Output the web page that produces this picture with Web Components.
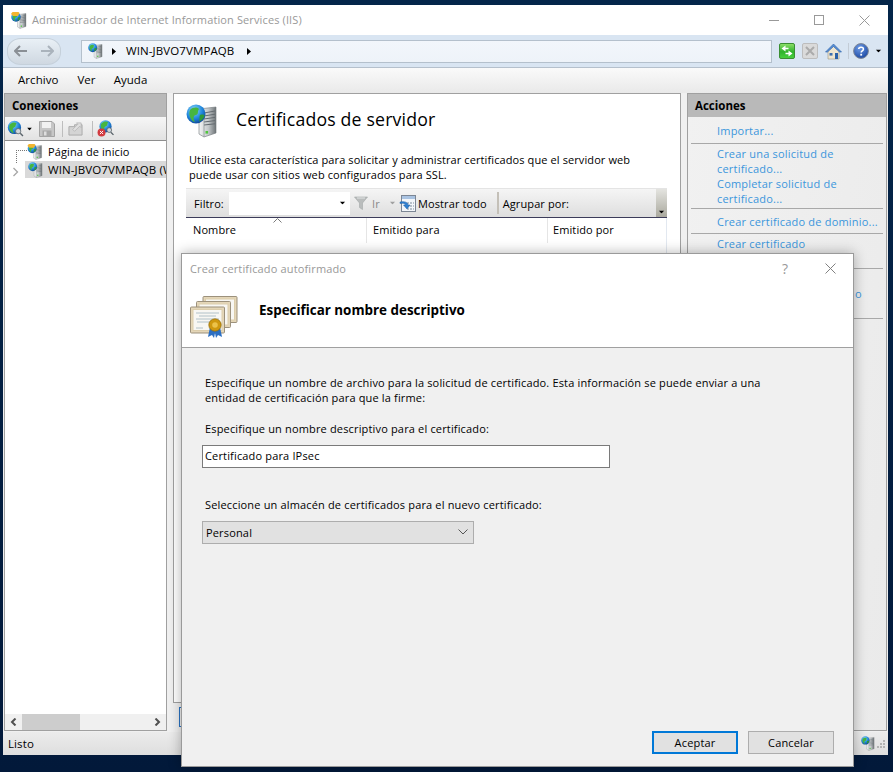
<!DOCTYPE html>
<html lang="es">
<head>
<meta charset="utf-8">
<title>Administrador de IIS</title>
<style>
  html, body { margin: 0; height: 100%; }
  body {
    background: linear-gradient(#04264a, #02193a);
    font: 11px "Open Sans", "Liberation Sans", sans-serif;
    letter-spacing: .1px;
    color: #000;
    overflow: hidden;
  }
</style>
</head>
<body>
<iis-window>
  <iis-caption slot="top" text="Administrador de Internet Information Services (IIS)"></iis-caption>
  <iis-navbar slot="top"></iis-navbar>
  <iis-menu slot="top"></iis-menu>
  <iis-connections slot="left"></iis-connections>
  <iis-content slot="center"></iis-content>
  <iis-actions slot="right">
    <action-link>Importar...</action-link>
    <action-sep style="margin-top:4px"></action-sep>
    <action-link style="margin-top:3px">Crear una solicitud de<br>certificado...</action-link>
    <action-link>Completar solicitud de<br>certificado...</action-link>
    <action-sep style="margin-top:1px"></action-sep>
    <action-link style="margin-top:6px">Crear certificado de dominio...</action-link>
    <action-sep style="margin-top:3px"></action-sep>
    <action-link style="margin-top:3px">Crear certificado</action-link>
    <action-sep style="margin-top:16px"></action-sep>
    <action-link style="margin-top:18px;margin-left:167px">o</action-link>
    <action-sep style="margin-top:16px"></action-sep>
  </iis-actions>
  <iis-status slot="bottom">Listo</iis-status>
</iis-window>
<cert-dialog></cert-dialog>

<script>
const serverBody = `
  <defs>
    <linearGradient id="sv" x1="0" x2="1" y1="0" y2="0">
      <stop offset="0" stop-color="#f4f5f5"/><stop offset=".55" stop-color="#c3c8ca"/><stop offset="1" stop-color="#6d7376"/>
    </linearGradient>
    <radialGradient id="gl" cx=".4" cy=".3" r=".8">
      <stop offset="0" stop-color="#8fdcf8"/><stop offset=".55" stop-color="#1f86dc"/><stop offset="1" stop-color="#0c3a86"/>
    </radialGradient>
  </defs>
  <path d="M13 5 L30 3 V29 L18 33 L13 30Z" fill="url(#sv)" stroke="#6f7578" stroke-width=".6"/>
  <path d="M18 9 L29 7 M18 12 L29 10.2 M18 15 L29 13.4 M18 18 L29 16.6 M18 21 L29 19.8" stroke="#646b70" stroke-width="1" fill="none"/>
  <path d="M18 8 V33" stroke="#888f92" stroke-width=".7"/>
  <rect x="19.5" y="27" width="2.6" height="2.6" fill="#4fc63a"/>
  <circle cx="10" cy="10" r="9.5" fill="url(#gl)"/>
  <path d="M4 6 C7 3 11 3 13 5 C11 8 13 10 10 11 C7 11 7 15 9 18 C5 17 2 11 4 6Z" fill="#46b53f"/>
  <path d="M14 11 C17 10 18.5 11 18.5 12 C17.5 15 15 17 13 17.5 C14 15 13 13 14 11Z" fill="#2f9a3a"/>`;

const ICONS = {
  server: `<svg viewBox="0 0 32 34">${serverBody}</svg>`,
  home: `<svg viewBox="0 0 32 34">${serverBody}
    <path d="M0 4 A10 10 0 0 1 17 2 L14 8 H4Z" fill="#f2b530"/></svg>`,
  connect: `<svg viewBox="0 0 32 32"><defs><radialGradient id="gl" cx=".4" cy=".3" r=".8"><stop offset="0" stop-color="#8fdcf8"/><stop offset=".55" stop-color="#1f86dc"/><stop offset="1" stop-color="#0c3a86"/></radialGradient></defs>
    <circle cx="14" cy="14" r="12.5" fill="url(#gl)"/>
    <path d="M5 9 C9 4 15 4 18 6 C15 10 18 12 13 14 C10 15 10 20 13 25 C7 24 2 15 5 9Z" fill="#46b53f"/>
    <circle cx="21" cy="21" r="5" fill="#cfd6da" stroke="#59636a" stroke-width="1.5"/>
    <path d="M25 25 L30 30" stroke="#59636a" stroke-width="2.6"/></svg>`,
  disconnect: `<svg viewBox="0 0 32 32"><defs><radialGradient id="gl" cx=".4" cy=".3" r=".8"><stop offset="0" stop-color="#8fdcf8"/><stop offset=".55" stop-color="#1f86dc"/><stop offset="1" stop-color="#0c3a86"/></radialGradient></defs>
    <circle cx="16" cy="12" r="11.5" fill="url(#gl)"/>
    <path d="M8 7 C12 2 18 2 21 4 C18 8 21 10 16 12 C13 13 13 16 15 21 C10 20 5 13 8 7Z" fill="#46b53f"/>
    <circle cx="23" cy="19" r="4.5" fill="#cfd6da" stroke="#59636a" stroke-width="1.5"/>
    <path d="M26 23 L31 28" stroke="#59636a" stroke-width="2.4"/>
    <circle cx="8.5" cy="23.5" r="7.5" fill="#d23a3f"/>
    <path d="M5.5 20.5 L11.5 26.5 M11.5 20.5 L5.5 26.5" stroke="#fff" stroke-width="1.8"/></svg>`,
  save: `<svg viewBox="0 0 16 16"><path d="M.5 .5 H13 L15.5 3 V15.5 H.5Z" fill="#c6c6c6" stroke="#a3a3a3"/>
    <rect x="3" y="1" width="9" height="6" fill="#f1f1f1"/><rect x="3.5" y="9.500" width="9" height="6" fill="#a8a8a8"/><rect x="5" y="10.500" width="2.5" height="4" fill="#dedede"/></svg>`,
  up: `<svg viewBox="0 0 16 16"><path d="M1 6 H7 V4 H15 V15 H1Z" fill="#d4d4d4" stroke="#a9a9a9"/>
    <path d="M5 9 L10.5 3.5 L9 2 H14 V7 L12.5 5.5 L7 11Z" fill="#e0e0e0" stroke="#adadad" stroke-width=".7"/></svg>`,
  refresh: `<svg viewBox="0 0 16 16"><defs><linearGradient id="g" x1="0" x2="0" y1="0" y2="1"><stop offset="0" stop-color="#8fe06a"/><stop offset=".55" stop-color="#2fb32c"/><stop offset="1" stop-color="#48d23e"/></linearGradient></defs>
    <rect x=".5" y=".5" width="15" height="15" rx="1.5" fill="url(#g)" stroke="#3a8f33"/>
    <path d="M2.500 5.500 L6.500 2.500 V8.500Z M9.500 7.500 L13.500 10.500 L9.500 13.500Z" fill="#fff"/>
    <path d="M6 5.500 H9.500 M6.500 10.500 H10" stroke="#fff" stroke-width="1.500" fill="none"/></svg>`,
  stop: `<svg viewBox="0 0 16 16"><rect x=".5" y=".5" width="15" height="15" rx="1.5" fill="#dadada" stroke="#bdbdbd"/>
    <path d="M4 4 L12 12 M12 4 L4 12" stroke="#ababab" stroke-width="2"/></svg>`,
  house: `<svg viewBox="0 0 17 17"><path d="M3 8 V16 H14 V8 L8.500 3Z" fill="#efe6cf" stroke="#9a947f" stroke-width=".6"/>
    <path d="M.5 9 L8.500 1 L16.500 9 L14.500 9 L8.500 3.500 L2.500 9Z" fill="#5a8fd4" stroke="#2a5ea8" stroke-width=".6"/>
    <rect x="10" y="10" width="3" height="6" fill="#2b62a8"/><rect x="4.500" y="10" width="3" height="2.600" fill="#3d6fae"/></svg>`,
  help: `<svg viewBox="0 0 16 16"><defs><radialGradient id="g" cx=".4" cy=".3" r=".8"><stop offset="0" stop-color="#6e9ce6"/><stop offset="1" stop-color="#123f9c"/></radialGradient></defs>
    <circle cx="8" cy="8" r="7.400" fill="url(#g)" stroke="#7e8794" stroke-width="1"/>
    <path d="M5.700 6 C5.800 3.600 10.500 3.600 10.400 6.200 C10.300 8 8.200 7.800 8.200 9.600" fill="none" stroke="#fff" stroke-width="1.600"/>
    <rect x="7.300" y="10.800" width="1.800" height="1.800" fill="#fff"/></svg>`,
  funnel: `<svg viewBox="0 0 14 14"><path d="M.5 1 H13.500 L8.500 7 V13.500 L5.500 11.500 V7Z" fill="#b9bcbc" stroke="#a3a7a7" stroke-width=".6"/><path d="M3 2 H11" stroke="#e3e5e5"/></svg>`,
  showall: `<svg viewBox="0 0 17 17"><rect x="2.500" y=".5" width="14" height="16" fill="#f3f6fa" stroke="#7c8694"/><rect x="3" y="1" width="13" height="3" fill="#a9c3e2"/>
    <path d="M8 8 H15 M8 11 H15 M8 14 H15" stroke="#7d8a99" stroke-dasharray="2 1"/>
    <path d="M1 7 C5 6 9 7 9 10 L11 10 L8 14 L4.500 10 L6.500 10 C6.500 8.600 4 8 1 8.500Z" fill="#2f7fd0" stroke="#1a5ca5" stroke-width=".5"/></svg>`,
  cert: `<svg viewBox="0 0 48 44">
    <defs><g id="c"><rect x=".5" y=".5" width="34" height="26" rx="1" fill="#e4d6b8" stroke="#9c917c" stroke-width="1"/>
      <rect x="3" y="3" width="29" height="21" fill="#f8f7f3" stroke="#dccdab" stroke-width="1"/></g></defs>
    <use href="#c" x="12.500" y="0"/><use href="#c" x="6" y="5"/><use href="#c" x="0" y="10.500"/>
    <path d="M6 17 H29 M9 20 H26 M6 23 H29 M7 26 H20 M6 32 H13" stroke="#a9bac4" stroke-width=".9"/>
    <path d="M20 31 L18 41 L22 39 L24 42 L25 37 L26 42 L28 39 L32 41 L30 31Z" fill="#2c6fc2"/>
    <circle cx="25" cy="29" r="6.200" fill="#cf980f" stroke="#8f6a08" stroke-width=".7"/><circle cx="25" cy="29" r="2.800" fill="#ecc24a"/></svg>`
};

// every custom element below just sets its own shadow markup
function shadow(el, html) {
  const t = document.createElement('template');
  t.innerHTML = html;
  el.attachShadow({ mode: 'open' }).appendChild(t.content.cloneNode(true));
}

class IisIcon extends HTMLElement {
  connectedCallback() {
    const size = this.getAttribute('size') || 16;
    const h = this.getAttribute('h') || size;
    shadow(this, `<style>:host{display:inline-block;flex:none;width:${size}px;height:${h}px;line-height:0}svg{width:100%;height:100%}</style>${ICONS[this.getAttribute('name')]}`);
  }
}

class IisArrow extends HTMLElement {
  connectedCallback() {
    const dir = this.getAttribute('dir') || 'down';
    const c = this.getAttribute('color') || '#000';
    const d = dir === 'down' ? 'M0 0 H7 L3.5 4Z' : 'M0 0 L4 3.5 L0 7Z';
    const vb = dir === 'down' ? '0 0 7 4' : '0 0 4 7';
    const w = dir === 'down' ? 7 : 4, h = dir === 'down' ? 4 : 7;
    shadow(this, `<style>:host{display:inline-block;flex:none;line-height:0}</style><svg width="${w}" height="${h}" viewBox="${vb}"><path d="${d}" fill="${c}"/></svg>`);
  }
}

class IisWindow extends HTMLElement {
  constructor() {
    super();
    shadow(this, `<style>
      :host{position:absolute;left:3px;top:5px;width:885px;height:750px;display:flex;flex-direction:column;background:#f0f0f0}
      main{flex:1;min-height:0;display:grid;grid-template-columns:163px 508px 200px;gap:6px;padding:0 1px}
    </style>
    <slot name="top"></slot>
    <main><slot name="left"></slot><slot name="center"></slot><slot name="right"></slot></main>
    <slot name="bottom"></slot>`);
  }
}

class IisCaption extends HTMLElement {
  connectedCallback() {
    shadow(this, `<style>
      :host{display:flex;align-items:center;height:30px;background:#fff;color:#999;padding-left:8px;position:relative}
      span{margin:0 0 1px 5px;letter-spacing:.12px}
      .btns{margin-left:auto;display:flex;align-items:center;gap:35px;padding-right:18px}
      svg{display:block}
    </style>
    <iis-icon name="home" size="16" h="17"></iis-icon>
    <span>${this.getAttribute('text')}</span>
    <div class="btns">
      <svg width="10" height="10"><path d="M0 5.500 H10" stroke="#999"/></svg>
      <svg width="10" height="10"><rect x=".5" y=".5" width="9" height="9" fill="none" stroke="#999"/></svg>
      <svg width="11" height="11"><path d="M.5 .5 L10.500 10.500 M10.500 .5 L.5 10.500" stroke="#999"/></svg>
    </div>`);
  }
}

class IisNavbar extends HTMLElement {
  connectedCallback() {
    shadow(this, `<style>
      :host{display:flex;align-items:center;height:32px;background:#d9e5f2;border-bottom:1px solid #b5c0cc;box-sizing:content-box;padding-left:4px}
      .pill{width:54px;height:27px;border-radius:14px/12px;background:linear-gradient(#e9f0f6,#cfd8e1);border:1px solid #c5d0da;box-sizing:border-box;display:flex;align-items:center;justify-content:space-between;padding:0 6px}
      .addr{margin-left:20px;width:691px;height:23px;box-sizing:border-box;border:1px solid #b4c0cc;background:linear-gradient(#f2f6fb,#eef3f9);display:flex;align-items:center;padding-left:6px}
      .addr span{margin:0 13px 1px 10px;font-size:11.500px;letter-spacing:.1px}
      .tools{display:flex;align-items:center;margin-left:7px}
      .sep{width:1px;height:16px;background:#c3ccd6;margin:0 4px 0 6px}
    </style>
    <div class="pill">
      <svg width="13" height="12"><path d="M6 1 L1 6 L6 11 M1 6 H13" stroke="#8a8f95" stroke-width="2" fill="none"/></svg>
      <svg width="13" height="12"><path d="M7 1 L12 6 L7 11 M0 6 H12" stroke="#aab3bc" stroke-width="2" fill="none"/></svg>
    </div>
    <div class="addr">
      <iis-icon name="server" size="15" h="16"></iis-icon>
      <iis-arrow dir="right" style="margin-left:9px"></iis-arrow>
      <span>WIN-JBVO7VMPAQB</span>
      <iis-arrow dir="right"></iis-arrow>
    </div>
    <div class="tools">
      <iis-icon name="refresh"></iis-icon>
      <iis-icon name="stop" style="margin-left:7px"></iis-icon>
      <iis-icon name="house" size="17" style="margin-left:7px"></iis-icon>
      <div class="sep"></div>
      <iis-icon name="help"></iis-icon>
      <iis-arrow style="margin-left:6px;transform:scale(.8)"></iis-arrow>
    </div>`);
  }
}

class IisMenu extends HTMLElement {
  connectedCallback() {
    shadow(this, `<style>
      :host{display:flex;align-items:center;gap:18px;height:25px;padding-left:15px;padding-bottom:2px;box-sizing:border-box;background:linear-gradient(#fafafa,#e9e9e9);font-size:11.500px;letter-spacing:.05px}
      span:first-of-type{margin-right:1px}
    </style><span>Archivo</span><span>Ver</span><span>Ayuda</span>`);
  }
}

class IisConnections extends HTMLElement {
  connectedCallback() {
    shadow(this, `<style>
      :host{display:flex;flex-direction:column;border:1px solid #a0a0a0;box-sizing:border-box;min-height:0;background:#fff;margin-bottom:1px;overflow:hidden}
      h2{margin:0;height:23px;line-height:24px;padding-left:7px;font-size:11.500px;font-weight:700;background:#b9b9b9;color:#000;letter-spacing:0}
      .bar{height:24px;background:linear-gradient(#f6f6f6,#e2e2e2);border-bottom:1px solid #8e8e8e;display:flex;align-items:center;padding-left:2px;box-sizing:border-box}
      .s{width:1px;height:16px;background:#bdbdbd;flex:none}
      .tree{flex:1;position:relative;padding-top:1px}
      .row{display:flex;align-items:center;height:17px;position:relative;white-space:nowrap;overflow:hidden}
      .row span{margin:0 0 1px 5px}
      .one{margin-left:22px;margin-top:1px}
      .two{margin-left:20px;padding-left:3px;background:#d9d9d9;margin-top:1px}
      .two span{font-size:11.500px;letter-spacing:.1px}
      .dots{position:absolute;left:11px;top:9px;width:11px;height:13px;border-top:1px dotted #777;border-left:1px dotted #777;box-sizing:border-box}
      .chev{position:absolute;left:8px;top:26px}
      .hs{height:16px;background:#f0f0f0;display:flex;align-items:center;position:relative}
      .thumb{position:absolute;left:17px;width:58px;top:0;bottom:0;background:#cdcdcd}
      .hs svg{position:absolute;top:4px}
    </style>
    <h2>Conexiones</h2>
    <div class="bar">
      <iis-icon name="connect" size="17"></iis-icon>
      <iis-arrow style="margin:0 0 0 2px;transform:scale(.7)"></iis-arrow>
      <iis-icon name="save" size="16" style="margin-left:6px"></iis-icon>
      <div class="s" style="margin:0 5px 0 7px"></div>
      <iis-icon name="up" size="15"></iis-icon>
      <div class="s" style="margin:0 4px 0 9px"></div>
      <iis-icon name="disconnect" size="17"></iis-icon>
    </div>
    <div class="tree">
      <div class="dots"></div>
      <svg class="chev" width="6" height="10"><path d="M.5 1 L4.500 5 L.5 9" fill="none" stroke="#a6a6a6" stroke-width="1.300"/></svg>
      <div class="row one"><iis-icon name="home" size="16"></iis-icon><span>Página de inicio</span></div>
      <div class="row two"><iis-icon name="server" size="15" h="16"></iis-icon><span>WIN-JBVO7VMPAQB (W</span></div>
    </div>
    <div class="hs">
      <svg width="8" height="8" style="left:5px"><path d="M5.500 .5 L2 4 L5.500 7.500" fill="none" stroke="#505050" stroke-width="2"/></svg>
      <div class="thumb"></div>
      <svg width="8" height="8" style="right:5px"><path d="M2.500 .5 L6 4 L2.500 7.500" fill="none" stroke="#505050" stroke-width="2"/></svg>
    </div>`);
  }
}

class IisContent extends HTMLElement {
  connectedCallback() {
    shadow(this, `<style>
      :host{display:flex;flex-direction:column;min-height:0}
      .panel{flex:1;background:#fff;border:1px solid #a0a0a0;box-sizing:border-box;padding:10px 13px 0 12px;display:flex;flex-direction:column;min-height:0;overflow:hidden}
      .head{display:flex;align-items:center;height:34px}
      h1{margin:0 0 4px 18px;font-size:17.700px;font-weight:400;letter-spacing:.01em}
      p{margin:14px 0 0 3px;width:460px;line-height:15px}
      .tb{margin-top:6px;height:30px;box-sizing:border-box;border-top:1px solid #e4e4e4;border-bottom:1px solid #3c3c5a;background:linear-gradient(#f5f5f5,#dedede);display:flex;align-items:center;padding-left:8px;position:relative}
      .lab{width:35px}
      .input{width:121px;height:23px;background:#fff;display:flex;align-items:center;justify-content:flex-end;padding-right:4px;box-sizing:border-box}
      .mute{color:#8a8a8a}
      .s{width:2px;height:22px;background:#c4c0b8;margin:0 4px 0 10px}
      .grip{position:absolute;right:0;top:0;bottom:0;width:11px;background:linear-gradient(#e4e4e0,#aaa99e);display:flex;align-items:flex-end;justify-content:center;padding-bottom:3px;box-sizing:border-box}
      .tbl{flex:1;border-right:1px solid #e2e8f0;position:relative;display:grid;grid-template-columns:181px 181px 1fr;grid-auto-rows:25px}
      .tbl div{padding:4px 0 0 6px;border-right:1px solid #e5e5e5;box-sizing:border-box}
      .tbl div:first-child{padding-left:7px}
      .tbl div:last-of-type{padding-left:5px;border-right:0}
      .sort{position:absolute;left:87px;top:0}
      .tabs{height:29px;padding:4px 0 0 6px;box-sizing:border-box}
      .tab{width:60px;height:20px;border:1px solid #2a74c4;box-sizing:border-box}
    </style>
    <div class="panel">
      <div class="head"><iis-icon name="server" size="32" h="34"></iis-icon><h1>Certificados de servidor</h1></div>
      <p>Utilice esta característica para solicitar y administrar certificados que el servidor web puede usar con sitios web configurados para SSL.</p>
      <div class="tb">
        <span class="lab">Filtro:</span>
        <div class="input"><iis-arrow style="transform:scale(.8)"></iis-arrow></div>
        <iis-icon name="funnel" size="14" style="margin-left:4px"></iis-icon>
        <span class="mute" style="margin-left:4px;width:8px">Ir</span>
        <iis-arrow color="#a0a0a0" style="margin-left:9px;transform:scale(.8)"></iis-arrow>
        <iis-icon name="showall" size="17" style="margin-left:3px"></iis-icon>
        <span style="margin-left:2px">Mostrar todo</span>
        <div class="s"></div>
        <span>Agrupar por:</span>
        <div class="grip"><iis-arrow style="transform:scale(.8)"></iis-arrow></div>
      </div>
      <div class="tbl">
        <div>Nombre</div><div>Emitido para</div><div>Emitido por</div>
        <svg class="sort" width="9" height="5"><path d="M.5 4.500 L4.500 .5 L8.500 4.500" fill="none" stroke="#7a7a7a"/></svg>
      </div>
    </div>
    <div class="tabs"><div class="tab"></div></div>`);
  }
}

class IisActions extends HTMLElement {
  constructor() {
    super();
    shadow(this, `<style>
      :host{display:block;border:1px solid #a0a0a0;box-sizing:border-box;background:linear-gradient(100deg,#f1f1f1,#eaeaea);min-height:0;margin-bottom:1px;overflow:hidden}
      h2{margin:0;height:23px;line-height:24px;padding-left:7px;font-size:11.500px;font-weight:700;background:#b9b9b9;letter-spacing:0}
      div{padding-top:7px}
    </style><h2>Acciones</h2><div><slot></slot></div>`);
  }
}

class ActionLink extends HTMLElement {
  constructor() {
    super();
    shadow(this, `<style>
      :host{display:flow-root;margin-left:29px;color:#3b96dc;white-space:nowrap;letter-spacing:.2px}
      div{line-height:15px;margin:-1px 0 1px}
    </style><div><slot></slot></div>`);
  }
}

class ActionSep extends HTMLElement {
  constructor() {
    super();
    shadow(this, `<style>:host{display:block;height:1px;margin:0 3px;background:#a8a8a8}</style>`);
  }
}

class IisStatus extends HTMLElement {
  constructor() {
    super();
    shadow(this, `<style>
      :host{display:flex;align-items:center;height:23px;padding-left:5px;background:linear-gradient(#ececec,#dedede);font-size:11.500px}
      .r{margin-left:auto;display:flex;align-items:center;gap:2px;padding-right:2px}
    </style><slot></slot>
    <div class="r"><iis-icon name="server" size="14" h="15"></iis-icon>
      <svg width="9" height="10"><g fill="#b3b3b3"><rect x="6" y="1" width="2" height="2"/><rect x="3" y="4" width="2" height="2"/><rect x="6" y="4" width="2" height="2"/><rect y="7" width="2" height="2"/><rect x="3" y="7" width="2" height="2"/><rect x="6" y="7" width="2" height="2"/></g></svg>
    </div>`);
  }
}

class CertDialog extends HTMLElement {
  connectedCallback() {
    shadow(this, `<style>
      :host{position:absolute;left:181px;top:253px;width:673px;height:514px;display:flex;flex-direction:column;box-sizing:border-box;border:1px solid #9a9a9a;background:#f0f0f0;box-shadow:0 0 12px rgba(0,0,0,.3)}
      header{background:#fff;height:93px;border-bottom:1px solid #a0a0a0;position:relative;flex:none}
      .cap{position:absolute;left:8px;top:7px;color:#999;letter-spacing:.15px}
      .q{position:absolute;left:600px;top:5px;color:#999;font-size:14px}
      .x{position:absolute;left:643px;top:9px}
      iis-icon{position:absolute;left:8px;top:42px}
      h3{position:absolute;left:77px;top:47px;margin:0;font-size:13.400px;font-weight:700;letter-spacing:0}
      .body{padding:27px 0 0 23px;flex:1;display:flex;flex-direction:column;letter-spacing:.16px}
      p{margin:0;width:580px;line-height:15px}
      label{display:block;line-height:15px}
      .inp{margin:9px 0 0 -3px;width:408px;height:23px;box-sizing:border-box;border:1px solid #7a7a7a;background:#fff;padding-left:2px;line-height:19px}
      .sel{margin:9px 0 0 -3px;width:272px;height:23px;box-sizing:border-box;border:1px solid #adadad;background:#e1e1e1;padding:0 5px 1px 3px;display:flex;align-items:center;justify-content:space-between}
      .btns{margin-top:auto;display:flex;gap:10px;padding:0 0 12px 447px}
      .b{width:86px;height:23px;box-sizing:border-box;border:1px solid #adadad;background:#e1e1e1;display:flex;align-items:center;justify-content:center}
      .b.on{border:2px solid #0078d7}
    </style>
    <header>
      <div class="cap">Crear certificado autofirmado</div>
      <div class="q">?</div>
      <svg class="x" width="11" height="11"><path d="M.5 .5 L10.500 10.500 M10.500 .5 L.5 10.500" stroke="#808080"/></svg>
      <iis-icon name="cert" size="48" h="44"></iis-icon>
      <h3>Especificar nombre descriptivo</h3>
    </header>
    <div class="body">
      <p>Especifique un nombre de archivo para la solicitud de certificado. Esta información se puede enviar a una entidad de certificación para que la firme:</p>
      <label style="margin-top:16px">Especifique un nombre descriptivo para el certificado:</label>
      <div class="inp">Certificado para IPsec</div>
      <label style="margin-top:29px">Seleccione un almacén de certificados para el nuevo certificado:</label>
      <div class="sel"><span>Personal</span><svg width="10" height="6"><path d="M.5 .5 L5 5 L9.500 .5" fill="none" stroke="#555"/></svg></div>
      <div class="btns"><div class="b on">Aceptar</div><div class="b">Cancelar</div></div>
    </div>`);
  }
}

customElements.define('iis-icon', IisIcon);
customElements.define('iis-arrow', IisArrow);
customElements.define('iis-window', IisWindow);
customElements.define('iis-caption', IisCaption);
customElements.define('iis-navbar', IisNavbar);
customElements.define('iis-menu', IisMenu);
customElements.define('iis-connections', IisConnections);
customElements.define('iis-content', IisContent);
customElements.define('iis-actions', IisActions);
customElements.define('action-link', ActionLink);
customElements.define('action-sep', ActionSep);
customElements.define('iis-status', IisStatus);
customElements.define('cert-dialog', CertDialog);
</script>
</body>
</html>
